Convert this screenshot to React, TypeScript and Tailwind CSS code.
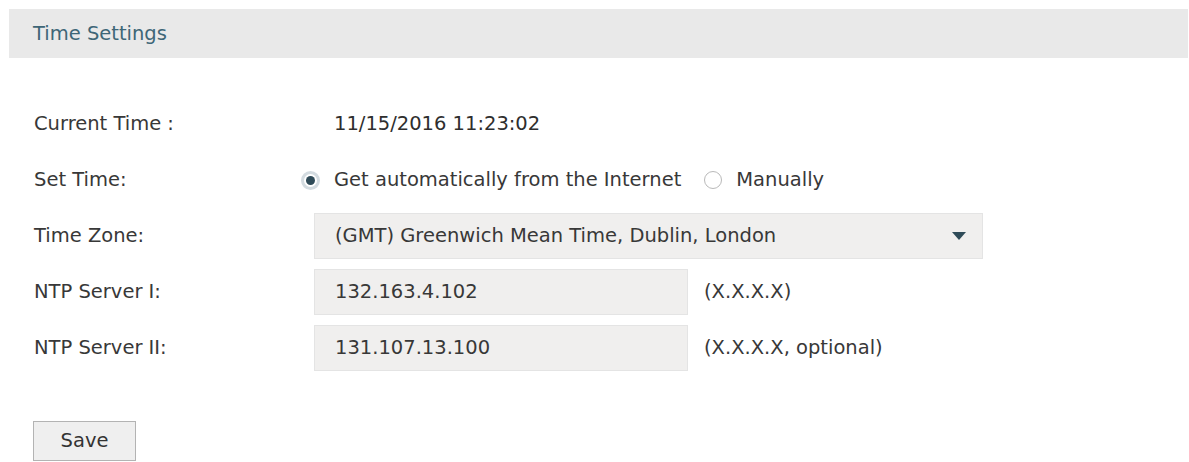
import React from "react";

const font = { fontFamily: '"DejaVu Sans", Verdana, sans-serif' };

function Radio({ checked }: { checked?: boolean }) {
  return checked ? (
    <span className="flex h-[19px] w-[19px] shrink-0 items-center justify-center rounded-full border-[3px] border-[#d3dbe0] bg-white">
      <span className="block h-[9px] w-[9px] rounded-full bg-[#2f4b58]" />
    </span>
  ) : (
    <span className="block h-[18px] w-[18px] shrink-0 rounded-full border border-[#b9b9b9] bg-white" />
  );
}

function Row({ label, children }: { label: string; children: React.ReactNode }) {
  return (
    <div className="flex h-[46px] items-center">
      <div className="w-[280px] shrink-0">{label}</div>
      {children}
    </div>
  );
}

export default function App() {
  return (
    <div
      className="h-[462px] w-[1189px] overflow-hidden bg-white pt-[9px] text-[19.5px] text-[#383838]"
      style={font}
    >
      <div className="ml-[9px] mr-[1px] flex h-[49px] items-center bg-[#e9e9e9] pl-[24px] text-[#3e6677]">
        Time Settings
      </div>

      <div className="mt-[43px] flex flex-col gap-[10px] pl-[34px]">
        <Row label="Current Time :">
          <span className="pl-[20px] text-[#2e2e2e]">11/15/2016 11:23:02</span>
        </Row>
        <Row label="Set Time:">
          <div className="-ml-[13px] flex items-center">
            <Radio checked />
            <span className="ml-[14px]">Get automatically from the Internet</span>
            <span className="ml-[23px]">
              <Radio />
            </span>
            <span className="ml-[14px]">Manually</span>
          </div>
        </Row>
        <Row label="Time Zone:">
          <div className="flex h-[46px] w-[669px] items-center justify-between border border-[#e4e4e4] bg-[#f0efee] pl-[20px] pr-[15px]">
            <span>(GMT) Greenwich Mean Time, Dublin, London</span>
            <svg width="16" height="10" viewBox="0 0 16 10">
              <path d="M1 1 L15 1 L8 9 Z" fill="#2f4b58" />
            </svg>
          </div>
        </Row>
        <Row label="NTP Server I:">
          <div className="flex h-[46px] w-[374px] items-center border border-[#e4e4e4] bg-[#f0efee] pl-[20px]">
            132.163.4.102
          </div>
          <span className="ml-[16px]">(X.X.X.X)</span>
        </Row>
        <Row label="NTP Server II:">
          <div className="flex h-[46px] w-[374px] items-center border border-[#e4e4e4] bg-[#f0efee] pl-[20px]">
            131.107.13.100
          </div>
          <span className="ml-[16px]">(X.X.X.X, optional)</span>
        </Row>
      </div>

      <div className="mt-[50px] pl-[33px]">
        <button className="h-[40px] w-[103px] border border-[#b3b3b3] bg-[#efefef] text-[#333]">
          Save
        </button>
      </div>
    </div>
  );
}
